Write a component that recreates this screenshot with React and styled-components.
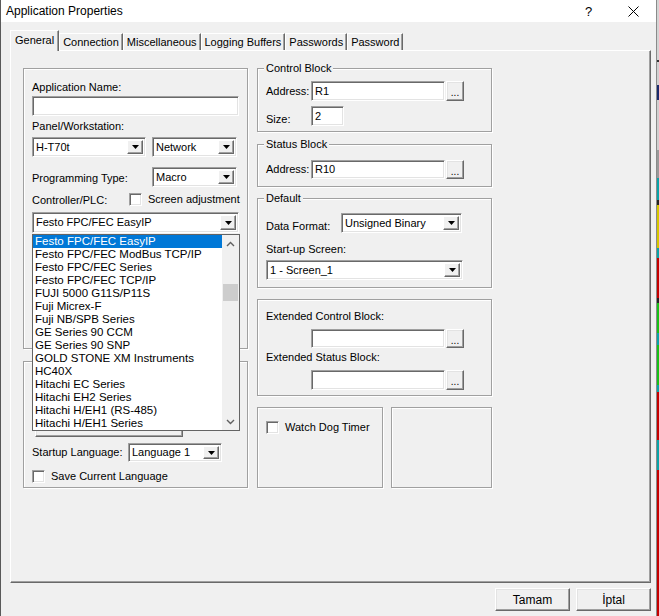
import React from 'react';
import styled, { createGlobalStyle } from 'styled-components';

const GlobalStyle = createGlobalStyle`
	* {
		box-sizing: border-box;
	}
	html,
	body {
		margin: 0;
		background: #f0f0f0;
	}
`;

const Screen = styled.div`
	display: flex;
	width: 659px;
	height: 616px;
	overflow: hidden;
	font-family: 'Liberation Sans', Arial, sans-serif;
	font-size: 11px;
	color: #000;
`;

const Window = styled.div`
	flex: none;
	width: 657px;
	display: flex;
	flex-direction: column;
	background: #f0f0f0;
	border-left: 1px solid #5a5a5a;
	border-right: 1px solid #8a8a8a;
`;

const DesktopEdge = styled.div`
	flex: 1;
	background: linear-gradient(
		#d4d4d4 0 60px,
		#333 60px 62px,
		#d0d0d0 62px 85px,
		#1a2a6c 85px 100px,
		#cfcfcf 100px 150px,
		#9a9a9a 150px 178px,
		#0aa3a8 178px 200px,
		#222 200px 205px,
		#d6c700 205px 248px,
		#0aa3a8 248px 258px,
		#c40000 258px 298px,
		#222 298px 303px,
		#18c018 303px 333px,
		#0aa3a8 333px 345px,
		#18c018 345px 385px,
		#0aa3a8 385px 392px,
		#c40000 392px 440px,
		#0aa3a8 440px 470px,
		#c40000 470px 616px
	);
`;

const TitleBar = styled.div`
	height: 22px;
	flex: none;
	display: flex;
	align-items: center;
	padding-left: 5px;
	background: #fff;
	font-size: 12px;
`;

const TitleActions = styled.div`
	margin-left: auto;
	display: flex;
	height: 100%;
`;

const TitleButton = styled.div`
	width: 45px;
	height: 100%;
	display: flex;
	align-items: center;
	justify-content: center;
	font-size: 13px;
`;

const Body = styled.div`
	flex: 1;
	display: flex;
	flex-direction: column;
	padding: 8px 4px 0 9px;
`;

const TabStrip = styled.div`
	display: flex;
	align-items: flex-end;
	height: 20px;
	position: relative;
	z-index: 1;
`;

const Tab = styled.div`
	height: ${(p) => (p.$active ? 21 : 17)}px;
	margin-bottom: ${(p) => (p.$active ? -1 : 0)}px;
	padding: ${(p) => (p.$active ? '0 4px 2px' : '0 3px')};
	display: flex;
	align-items: center;
	background: #f0f0f0;
	border: 1px solid;
	border-bottom: none;
	border-color: #fff #696969 transparent #fff;
	box-shadow: inset -1px 0 0 #a0a0a0;
	white-space: nowrap;
`;

const TabPanel = styled.div`
	width: 641px;
	height: 533px;
	border: 1px solid;
	border-color: #fff #696969 #696969 #fff;
	box-shadow: inset -1px -1px 0 #a0a0a0;
	padding: 17px 0 0 12px;
`;

const Columns = styled.div`
	display: grid;
	grid-template-columns: 225px 235px;
	column-gap: 9px;
	align-items: start;
`;

const Column = styled.div`
	display: flex;
	flex-direction: column;
	gap: ${(p) => p.$gap}px;
`;

const GroupBox = styled.div`
	position: relative;
	height: ${(p) => p.$h}px;
	width: ${(p) => (p.$w ? `${p.$w}px` : 'auto')};
	margin-top: ${(p) => p.$mt || 0}px;
	border: 1px solid #a0a0a0;
	box-shadow: 1px 1px 0 #fff, inset 1px 1px 0 #fff;
	padding-left: 8px;
	display: flex;
	flex-direction: column;
	justify-content: ${(p) => (p.$bottom ? 'flex-end' : 'flex-start')};
	padding-bottom: ${(p) => (p.$bottom ? 4 : 0)}px;
`;

const BoxRow = styled.div`
	display: flex;
	gap: 8px;
`;

const Legend = styled.span`
	position: absolute;
	top: -7px;
	left: 6px;
	padding: 0 2px;
	line-height: 13px;
	background: #f0f0f0;
`;

const Label = styled.div`
	flex: none;
	line-height: 13px;
	margin-top: ${(p) => p.$mt || 0}px;
	width: ${(p) => (p.$w ? `${p.$w}px` : 'auto')};
	padding-top: ${(p) => p.$drop || 0}px;
	white-space: nowrap;
`;

const Row = styled.div`
	display: flex;
	align-items: ${(p) => p.$align || 'center'};
	gap: ${(p) => p.$gap || 0}px;
	margin-top: ${(p) => p.$mt || 0}px;
	margin-left: ${(p) => p.$ml || 0}px;
	margin-bottom: ${(p) => p.$mb || 0}px;
`;

const Sunken = styled.div`
	flex: none;
	position: relative;
	width: ${(p) => p.$w}px;
	height: ${(p) => p.$h || 20}px;
	background: #fff;
	border: 1px solid;
	border-color: #a0a0a0 #fff #fff #a0a0a0;
	box-shadow: inset 1px 1px 0 #696969, inset -1px -1px 0 #e3e3e3;
	padding-left: 3px;
	display: flex;
	align-items: center;
	line-height: 13px;
	white-space: nowrap;
	overflow: hidden;
`;

const DropButton = styled.div`
	position: absolute;
	top: 2px;
	right: 2px;
	bottom: 2px;
	width: 16px;
	display: flex;
	align-items: center;
	justify-content: center;
	background: #f0f0f0;
	border: 1px solid;
	border-color: #fff #696969 #696969 #fff;
	box-shadow: inset -1px -1px 0 #a0a0a0;
`;

const RaisedButton = styled.div`
	flex: none;
	width: ${(p) => p.$w}px;
	height: ${(p) => p.$h}px;
	margin-left: ${(p) => (p.$small ? 1 : 0)}px;
	display: flex;
	align-items: center;
	justify-content: center;
	background: #f0f0f0;
	border: 1px solid;
	border-color: #fff #696969 #696969 #fff;
	box-shadow: inset -1px -1px 0 #a0a0a0, inset 1px 1px 0 #e3e3e3;
	font-size: ${(p) => (p.$small ? 10 : 12)}px;
	padding-top: ${(p) => (p.$small ? 3 : 0)}px;
`;

const Check = styled.span`
	flex: none;
	width: 13px;
	height: 13px;
	background: #fff;
	border: 1px solid;
	border-color: #a0a0a0 #fff #fff #a0a0a0;
	box-shadow: inset 1px 1px 0 #696969, inset -1px -1px 0 #e3e3e3;
`;

const CheckText = styled.span`
	margin-left: 6px;
	line-height: 13px;
	white-space: nowrap;
`;

const HiddenButton = styled(RaisedButton)`
	margin-left: 3px;
	margin-bottom: 6px;
`;

const DropList = styled.div`
	position: absolute;
	z-index: 10;
	top: 165px;
	left: 8px;
	width: 208px;
	height: 197px;
	display: flex;
	background: #fff;
	border: 1px solid #646464;
	font-size: 11.5px;
`;

const Items = styled.div`
	flex: 1;
	display: flex;
	flex-direction: column;
`;

const Item = styled.div`
	height: 13px;
	line-height: 13px;
	padding-left: 2px;
	white-space: nowrap;
	background: ${(p) => (p.$selected ? '#0078d7' : 'transparent')};
	color: ${(p) => (p.$selected ? '#fff' : '#000')};
`;

const ScrollBar = styled.div`
	width: 17px;
	flex: none;
	display: flex;
	flex-direction: column;
	background: #f0f0f0;
`;

const ScrollArrow = styled.div`
	height: 17px;
	display: flex;
	align-items: center;
	justify-content: center;
`;

const ScrollTrack = styled.div`
	flex: 1;
	padding: 32px 1px 0;
`;

const Thumb = styled.div`
	height: 17px;
	background: #cdcdcd;
`;

const ButtonRow = styled.div`
	display: flex;
	justify-content: flex-end;
	gap: 6px;
	margin-top: 5px;
	padding-right: 1px;
`;

const Arrow = () => (
	<svg width="7" height="4" viewBox="0 0 7 4">
		<path d="M0 0h7L3.5 4z" fill="#000" />
	</svg>
);

const Chevron = ({ up }) => (
	<svg width="9" height="6" viewBox="0 0 9 6">
		<path
			d={up ? 'M1 5L4.5 1.5L8 5' : 'M1 1L4.5 4.5L8 1'}
			fill="none"
			stroke="#606060"
			strokeWidth="1.4"
		/>
	</svg>
);

const Select = ({ w, h, children }) => (
	<Sunken $w={w} $h={h}>
		{children}
		<DropButton>
			<Arrow />
		</DropButton>
	</Sunken>
);

const plcs = [
	'Festo FPC/FEC EasyIP',
	'Festo FPC/FEC ModBus TCP/IP',
	'Festo FPC/FEC Series',
	'Festo FPC/FEC TCP/IP',
	'FUJI 5000 G11S/P11S',
	'Fuji Micrex-F',
	'Fuji NB/SPB Series',
	'GE Series 90 CCM',
	'GE Series 90 SNP',
	'GOLD STONE XM Instruments',
	'HC40X',
	'Hitachi EC Series',
	'Hitachi EH2 Series',
	'Hitachi H/EH1 (RS-485)',
	'Hitachi H/EH1 Series',
];

const tabs = ['General', 'Connection', 'Miscellaneous', 'Logging Buffers', 'Passwords', 'Password'];

export default function App() {
	return (
		<Screen>
			<GlobalStyle />
			<Window>
				<TitleBar>
					Application Properties
					<TitleActions>
						<TitleButton>?</TitleButton>
						<TitleButton>
							<svg width="11" height="11" viewBox="0 0 11 11">
								<path d="M0.5 0.5L10.5 10.5M10.5 0.5L0.5 10.5" stroke="#000" strokeWidth="1" />
							</svg>
						</TitleButton>
					</TitleActions>
				</TitleBar>
				<Body>
					<TabStrip>
						{tabs.map((t, i) => (
							<Tab key={t} $active={i === 0}>
								{t}
							</Tab>
						))}
					</TabStrip>
					<TabPanel>
						<Columns>
							<Column $gap={12}>
								<GroupBox $h={281}>
									<Label $mt={12}>Application Name:</Label>
									<Row $mt={2}>
										<Sunken $w={207} />
									</Row>
									<Label $mt={4}>Panel/Workstation:</Label>
									<Row $mt={4} $gap={6}>
										<Select w={114}>H-T70t</Select>
										<Select w={85}>Network</Select>
									</Row>
									<Row $mt={10} $align="flex-start">
										<Label $w={120} $drop={5}>Programming Type:</Label>
										<Select w={85}>Macro</Select>
									</Row>
									<Row $mt={4}>
										<Label $w={97} $drop={3}>Controller/PLC:</Label>
										<Check />
										<CheckText>Screen adjustment</CheckText>
									</Row>
									<Row $mt={5}>
										<Select w={207} h={21}>Festo FPC/FEC EasyIP</Select>
									</Row>
									<DropList>
										<Items>
											{plcs.map((p, i) => (
												<Item key={p} $selected={i === 0}>
													{p}
												</Item>
											))}
										</Items>
										<ScrollBar>
											<ScrollArrow>
												<Chevron up />
											</ScrollArrow>
											<ScrollTrack>
												<Thumb />
											</ScrollTrack>
											<ScrollArrow>
												<Chevron />
											</ScrollArrow>
										</ScrollBar>
									</DropList>
								</GroupBox>
								<GroupBox $h={127} $bottom>
									<HiddenButton $w={148} $h={26} />
									<Row $mb={8}>
										<Label $w={96}>Startup Language:</Label>
										<Select w={94} h={19}>Language 1</Select>
									</Row>
									<Row>
										<Check />
										<CheckText>Save Current Language</CheckText>
									</Row>
								</GroupBox>
							</Column>
							<Column $gap={11}>
								<GroupBox $h={64}>
									<Legend>Control Block</Legend>
									<Row $mt={12}>
										<Label $w={45}>Address:</Label>
										<Sunken $w={134}>R1</Sunken>
										<RaisedButton $w={18} $h={20} $small>
											...
										</RaisedButton>
									</Row>
									<Row $mt={5} $align="flex-end">
										<Label $w={45}>Size:</Label>
										<Sunken $w={33}>2</Sunken>
									</Row>
								</GroupBox>
								<GroupBox $h={43} $mt={1}>
									<Legend>Status Block</Legend>
									<Row $mt={15}>
										<Label $w={45}>Address:</Label>
										<Sunken $w={134} $h={19}>R10</Sunken>
										<RaisedButton $w={18} $h={19} $small>
											...
										</RaisedButton>
									</Row>
								</GroupBox>
								<GroupBox $h={90}>
									<Legend>Default</Legend>
									<Row $mt={14} $align="flex-start">
										<Label $w={75} $drop={7}>Data Format:</Label>
										<Select w={121}>Unsigned Binary</Select>
									</Row>
									<Label $mt={10}>Start-up Screen:</Label>
									<Row $mt={4}>
										<Select w={197}>1 - Screen_1</Select>
									</Row>
								</GroupBox>
								<GroupBox $h={97}>
									<Label $mt={10}>Extended Control Block:</Label>
									<Row $mt={6} $ml={45}>
										<Sunken $w={134} $h={19} />
										<RaisedButton $w={18} $h={19} $small>
											...
										</RaisedButton>
									</Row>
									<Label $mt={3}>Extended Status Block:</Label>
									<Row $mt={6} $ml={45}>
										<Sunken $w={134} />
										<RaisedButton $w={18} $h={20} $small>
											...
										</RaisedButton>
									</Row>
								</GroupBox>
								<BoxRow>
									<GroupBox $h={81} $w={126}>
										<Row $mt={13}>
											<Check />
											<CheckText>Watch Dog Timer</CheckText>
										</Row>
									</GroupBox>
									<GroupBox $h={81} $w={101} />
								</BoxRow>
							</Column>
						</Columns>
					</TabPanel>
					<ButtonRow>
						<RaisedButton $w={75} $h={23}>
							Tamam
						</RaisedButton>
						<RaisedButton $w={75} $h={23}>
							İptal
						</RaisedButton>
					</ButtonRow>
				</Body>
			</Window>
			<DesktopEdge />
		</Screen>
	);
}
